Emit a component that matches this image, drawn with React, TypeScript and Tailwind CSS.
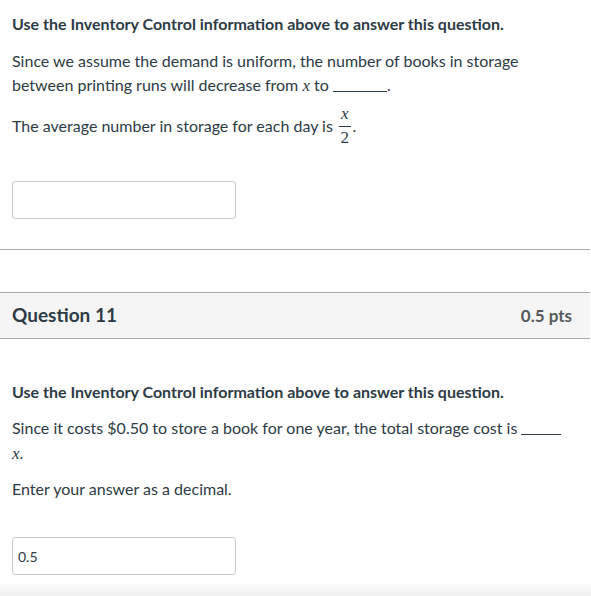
import { type FunctionComponent } from "react";

const MathX: FunctionComponent = () => (
	<span className="font-['Liberation_Serif',serif] text-[17px] italic">x</span>
);

const Blank: FunctionComponent<{ width: string }> = ({ width }) => (
	<span className={`inline-block h-px bg-[#2d3b45] align-[-1px] ${width}`} />
);

const Fraction: FunctionComponent = () => (
	<span className="mx-[2px] inline-flex flex-col items-stretch text-center align-[13px] font-['Liberation_Serif',serif] text-[17px]">
		<span className="h-[16px] px-[2px] leading-[8px] italic">x</span>
		<span className="h-px bg-[#2d3b45]" />
		<span className="h-[19px] leading-[21px]">2</span>
	</span>
);

const AnswerInput: FunctionComponent<{ value: string }> = ({ value }) => (
	<input
		type="text"
		readOnly
		value={value}
		className="h-[38px] w-[224px] rounded-[3px] border border-[#c7cdd1] bg-white px-[5px] text-[14px] text-[#2d3b45] outline-none"
	/>
);

export default function App() {
	return (
		<div className="relative h-[596px] w-[591px] overflow-hidden bg-white font-['Lato',sans-serif] text-[16px] text-[#2d3b45]">
			<section className="px-3 pt-3">
				<p className="leading-6 font-bold">Use the Inventory Control information above to answer this question.</p>
				<p className="mt-[13px] leading-6">
					Since we assume the demand is uniform, the number of books in storage between printing runs will
					decrease from <MathX /> to <Blank width="w-[54px]" />.
				</p>
				<p className="mt-[12px] leading-6">
					The average number in storage for each day is <Fraction />.
				</p>
				<div className="mt-[35px] flex">
					<AnswerInput value="" />
				</div>
			</section>

			<div className="mt-[30px] mr-px border-t border-[#ababab]" />

			<div className="mt-[42px] mr-px flex h-[47px] items-center justify-between border-y border-[#ababab] bg-[#f5f5f5] pr-[18px] pl-3">
				<h2 className="text-[19px] font-bold">Question 11</h2>
				<span className="text-[17px] font-bold text-[#565a5c]">0.5 pts</span>
			</div>

			<section className="px-3 pt-[41px]">
				<p className="leading-6 font-bold">Use the Inventory Control information above to answer this question.</p>
				<p className="mt-[11px] leading-[25px]">
					Since it costs $0.50 to store a book for one year, the total storage cost is <Blank width="w-[40px]" />
					<br />
					<MathX />.
				</p>
				<p className="mt-[11px] leading-6">Enter your answer as a decimal.</p>
				<div className="mt-[36px] flex">
					<AnswerInput value="0.5" />
				</div>
			</section>

			<div className="absolute right-0 bottom-0 left-0 h-[14px] bg-gradient-to-b from-white to-[#f0f0f0]" />
		</div>
	);
}
